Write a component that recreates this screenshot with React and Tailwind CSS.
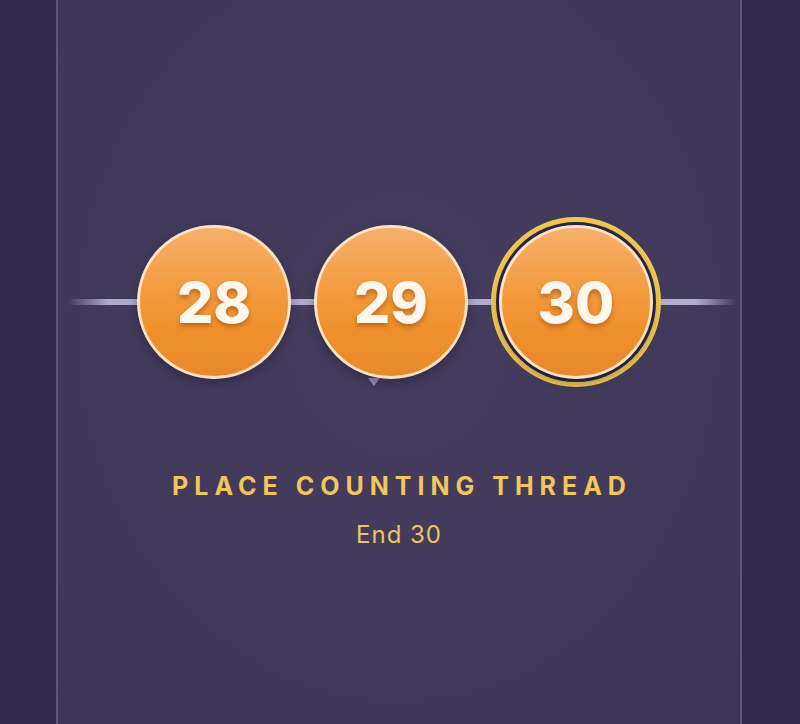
import React from 'react';

const BEADS = [
  { n: 28, current: false },
  { n: 29, current: false, pointer: true },
  { n: 30, current: true },
];

const FONT = { fontFamily: 'Inter, "Open Sans", "Liberation Sans", sans-serif' };

function Bead({ n, pointer }) {
  return (
    <div className="relative w-[154px] h-[154px]">
      {pointer && (
        <div className="absolute -bottom-[7px] left-[54px] w-0 h-0 border-l-[6px] border-r-[6px] border-t-[8px] border-l-transparent border-r-transparent border-t-[#9893b3]" />
      )}
      <div className="absolute inset-0 rounded-full border-[3px] border-[#fde3c4] bg-[linear-gradient(180deg,#f6b06b_0%,#f39a3c_45%,#f0902c_70%,#e8882e_100%)] shadow-[0_4px_10px_rgba(20,12,40,0.35)] flex items-center justify-center">
        <span
          className="text-[57px] font-extrabold leading-none text-[#fff6ec] [text-shadow:0_3px_5px_rgba(120,50,0,0.45)]"
          style={FONT}
        >
          {n}
        </span>
      </div>
    </div>
  );
}

export default function App() {
  return (
    <div className="w-[800px] h-[724px] bg-[#322a4d] overflow-hidden flex">
      <div className="ml-[56px] w-[686px] h-full border-x-2 border-[#5d5680] bg-[radial-gradient(ellipse_at_50%_45%,#463d5e_0%,#423a5a_55%,#3d3556_100%)] flex flex-col items-center pt-[217px]">
        <div className="relative w-full h-[170px] flex items-center justify-center">
          <div className="absolute left-[10px] right-[4px] top-[82px] h-[6px] bg-[linear-gradient(90deg,rgba(190,186,210,0)_0%,#aeaac4_6%,#b2aec8_94%,rgba(190,186,210,0)_100%)]" />
          <div className="relative flex items-center gap-[23px]">
            {BEADS.map((b) =>
              b.current ? (
                <div
                  key={b.n}
                  className="rounded-full border-[5px] border-[#eec851] p-[3px] bg-[#2d2647]"
                >
                  <Bead n={b.n} />
                </div>
              ) : (
                <Bead key={b.n} n={b.n} pointer={b.pointer} />
              )
            )}
          </div>
        </div>
        <h2
          className="mt-[84px] text-[25px] font-bold leading-[30px] tracking-[0.24em] pl-[0.24em] text-[#f1c75b]"
          style={FONT}
        >
          PLACE COUNTING THREAD
        </h2>
        <p className="mt-[20px] text-[24px] leading-[28px] tracking-[0.04em] text-[#ecc463]" style={FONT}>
          End 30
        </p>
      </div>
    </div>
  );
}
